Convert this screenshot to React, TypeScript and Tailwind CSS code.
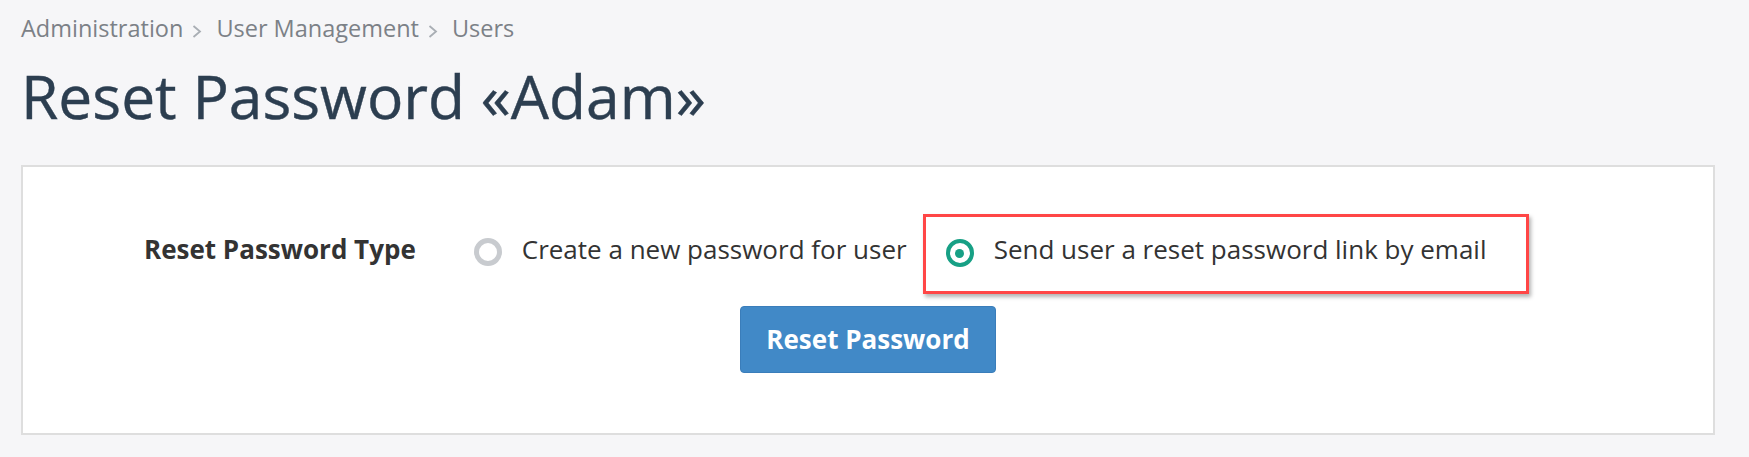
import { ReactNode } from "react";

function Chevron() {
  return (
    <svg width="10" height="13" viewBox="0 0 10 13" className="ml-[9px] mr-[14px] mt-[13px] shrink-0" fill="none">
      <path d="M1.5 1 L8 6.5 L1.5 12" stroke="#a9aeb4" strokeWidth="1.8" />
    </svg>
  );
}

function Radio({ checked }: { checked?: boolean }) {
  if (checked) {
    return (
      <span className="mt-[7px] flex h-[28px] w-[28px] shrink-0 items-center justify-center rounded-full border-[4px] border-[#17a085] bg-white">
        <span className="h-[9px] w-[9px] rounded-full bg-[#17a085]" />
      </span>
    );
  }
  return <span className="mt-[6px] h-[28px] w-[28px] shrink-0 rounded-full border-[5px] border-[#c8cbcf] bg-white" />;
}

function Option({ checked, children }: { checked?: boolean; children: ReactNode }) {
  return (
    <label className="flex items-start">
      <Radio checked={checked} />
      <span className="ml-[20px] text-[26px] leading-[35px] text-[#333]">{children}</span>
    </label>
  );
}

export default function App() {
  return (
    <div
      className="min-h-[457px] w-full bg-[#f6f6f8] pl-[21px] pr-[34px] pt-[12px]"
      style={{ fontFamily: '"Open Sans", "Liberation Sans", sans-serif' }}
    >
      <nav className="flex items-start text-[23.5px] leading-[32px] text-[#7c8187]">
        <span>Administration</span>
        <Chevron />
        <span>User Management</span>
        <Chevron />
        <span>Users</span>
      </nav>

      <h1 className="mt-[11px] text-[60.5px] leading-[82px] text-[#2c3e50] [-webkit-text-stroke:0.4px_#2c3e50]">
        Reset Password «Adam»
      </h1>

      <div className="mt-[28px] h-[270px] border-2 border-[#dedede] bg-white pt-[47px]">
        <div className="flex items-start pl-[121px]">
          <div className="mt-[18px] text-[26px] font-bold leading-[35px] text-[#333]">Reset Password Type</div>
          <div className="ml-[58px] flex items-start">
            <div className="mt-[18px]">
              <Option>Create a new password for user</Option>
            </div>
            <div className="ml-[16px] h-[80px] border-[3px] border-[#ff4646] pl-[20px] pr-[40px] pt-[15px] shadow-[2px_3px_4px_rgba(0,0,0,0.3)]">
              <Option checked>Send user a reset password link by email</Option>
            </div>
          </div>
        </div>

        <div className="mt-[12px] flex justify-center">
          <button className="h-[67px] rounded-[4px] border border-[#3a7dba] bg-[#4189c7] px-[25px] text-[26px] font-bold text-white">
            Reset Password
          </button>
        </div>
      </div>
    </div>
  );
}
